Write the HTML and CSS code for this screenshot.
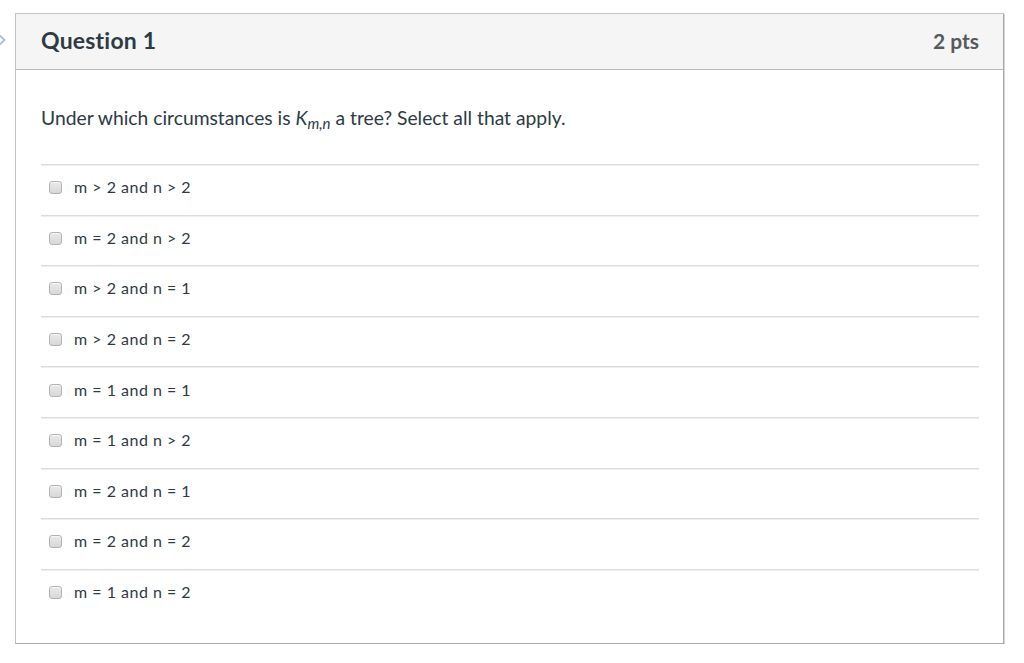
FILE: index.html
```html
<!DOCTYPE html>
<html>
<head>
<meta charset="utf-8">
<link rel="stylesheet" href="styles.css">
</head>
<body>
<div class="page">
  <div class="gutter">
    <svg class="chev" width="16" height="20" viewBox="0 0 16 20"><path d="M-3 1 L4.5 8 L-3 15" fill="none" stroke="#a9bdd1" stroke-width="1.8"/></svg>
  </div>
  <div class="quiz">
    <div class="head">
      <div class="title">Question 1</div>
      <div class="pts">2 pts</div>
    </div>
    <div class="body">
      <p class="text">Under which circumstances is <i>K<sub>m,n</sub></i> a tree? Select all that apply.</p>
      <div class="answers">
        <label class="ans"><span class="cb"></span><span>m &gt; 2 and n &gt; 2</span></label>
        <label class="ans"><span class="cb"></span><span>m = 2 and n &gt; 2</span></label>
        <label class="ans"><span class="cb"></span><span>m &gt; 2 and n = 1</span></label>
        <label class="ans"><span class="cb"></span><span>m &gt; 2 and n = 2</span></label>
        <label class="ans"><span class="cb"></span><span>m = 1 and n = 1</span></label>
        <label class="ans"><span class="cb"></span><span>m = 1 and n &gt; 2</span></label>
        <label class="ans"><span class="cb"></span><span>m = 2 and n = 1</span></label>
        <label class="ans"><span class="cb"></span><span>m = 2 and n = 2</span></label>
        <label class="ans"><span class="cb"></span><span>m = 1 and n = 2</span></label>
      </div>
    </div>
  </div>
</div>
</body>
</html>
```

FILE: styles.css
```css
html, body {
  margin: 0;
  padding: 0;
  background: #ffffff;
  font-family: Lato, "Liberation Sans", sans-serif;
  color: #2d3b45;
}
.page {
  display: flex;
  align-items: flex-start;
  padding-top: 13px;
}
.gutter {
  width: 15px;
  flex: none;
}
.chev {
  display: block;
  margin-top: 19px;
}
.quiz {
  width: 987px;
  height: 629px;
  border: 1px solid #c4c4c4;
  border-right-color: #a9a9a9;
  border-bottom-color: #a9a9a9;
  box-shadow: 1px 1px 0 #d6d6d6;
  box-sizing: content-box;
}
.head {
  height: 55px;
  background: #f5f5f5;
  border-bottom: 1px solid #b9b9b9;
  display: flex;
  align-items: center;
  justify-content: space-between;
  padding: 0 24px 0 25px;
}
.title {
  font-size: 23px;
  font-weight: 700;
  letter-spacing: 0.2px;
  color: #2d3b45;
  padding-bottom: 4px;
}
.pts {
  font-size: 21px;
  font-weight: 700;
  color: #555a5e;
  padding-bottom: 3px;
}
.body {
  padding: 0 24px 0 25px;
}
.text {
  margin: 0;
  padding-top: 34px;
  font-size: 19.3px;
  line-height: 28px;
  height: 60px;
}
.text i {
  font-style: italic;
}
.text sub {
  font-size: 15px;
  vertical-align: -4px;
  line-height: 0;
}
.answers {
  display: flex;
  flex-direction: column;
}
.ans {
  display: flex;
  align-items: center;
  height: 49.6px;
  border-top: 1px solid #dcdcdc;
  box-shadow: inset 0 1px 0 #efefef;
  font-size: 16px;
  letter-spacing: 0.5px;
  padding-left: 8px;
  gap: 12px;
  box-sizing: content-box;
}
.ans span:last-child {
  padding-bottom: 6px;
}
.cb {
  width: 11px;
  height: 11px;
  border: 1px solid #b3b3b3;
  border-radius: 3px;
  background: linear-gradient(#e9e9e9, #d8d8d8);
  box-shadow: inset 0 1px 0 #f6f6f6;
  flex: none;
  margin-bottom: 4px;
}
```
